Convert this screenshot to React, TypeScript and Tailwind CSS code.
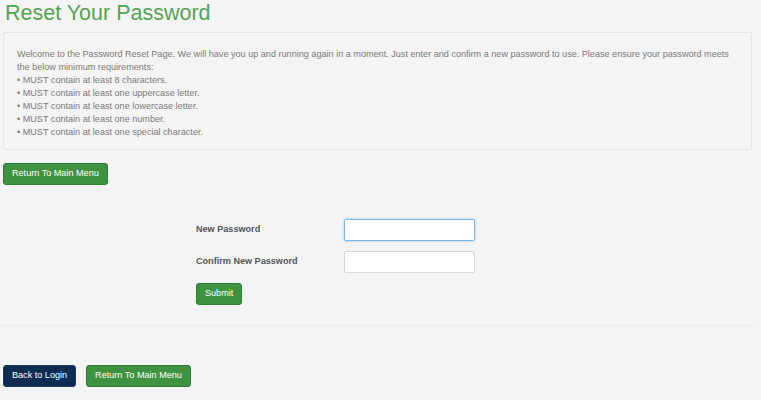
const rules = [
  "MUST contain at least 8 characters.",
  "MUST contain at least one uppercase letter.",
  "MUST contain at least one lowercase letter.",
  "MUST contain at least one number.",
  "MUST contain at least one special character.",
]

const GreenButton = ({ label }: { label: string }) => (
  <button className="h-[22px] px-[8px] rounded-[3px] border border-[#2f7d32] bg-[#3f923f] text-white text-[9.1px] leading-none">
    {label}
  </button>
)

export default function App() {
  return (
    <div className="min-h-[400px] bg-[#f4f4f4] font-['Liberation_Sans',Arial,sans-serif] px-[3px]">
      <h1 className="pt-[1px] pl-[2px] text-[21.5px] leading-[24px] text-[#55a453]">Reset Your Password</h1>

      <div className="mt-[7px] w-[749px] border border-[#e4e4e4] rounded-[2px] bg-[#f4f4f4] px-[13px] pt-[15px] pb-[10px] text-[9.1px] leading-[13px] text-[#7a7a7a]">
        <p>
          Welcome to the Password Reset Page. We will have you up and running again in a moment. Just enter and confirm a new password to use. Please ensure your password meets the below minimum requirements:
        </p>
        {rules.map((r) => (
          <p key={r}>• {r}</p>
        ))}
      </div>

      <div className="mt-[13px] flex">
        <GreenButton label="Return To Main Menu" />
      </div>

      <form className="mt-[34px] ml-[193px] flex flex-col gap-[10px]">
        <div className="flex items-center">
          <label className="w-[148px] text-[9.1px] font-bold text-[#555]">New Password</label>
          <input
            type="password"
            className="h-[22px] w-[131px] rounded-[2px] border border-[#7fb5e6] bg-white shadow-[0_0_3px_rgba(102,175,233,0.6)] outline-none"
          />
        </div>
        <div className="flex items-center">
          <label className="w-[148px] text-[9.1px] font-bold text-[#555]">Confirm New Password</label>
          <input
            type="password"
            className="h-[22px] w-[131px] rounded-[2px] border border-[#d6d6d6] bg-white outline-none"
          />
        </div>
        <div className="flex">
          <GreenButton label="Submit" />
        </div>
      </form>

      <hr className="mt-[20px] -ml-[3px] w-[755px] border-t border-[#ebebeb]" />

      <div className="mt-[39px] flex gap-[10px]">
        <button className="h-[22px] px-[8px] rounded-[3px] border border-[#1d3b63] bg-[#0d2c52] text-white text-[9.1px] leading-none">
          Back to Login
        </button>
        <GreenButton label="Return To Main Menu" />
      </div>
    </div>
  )
}
